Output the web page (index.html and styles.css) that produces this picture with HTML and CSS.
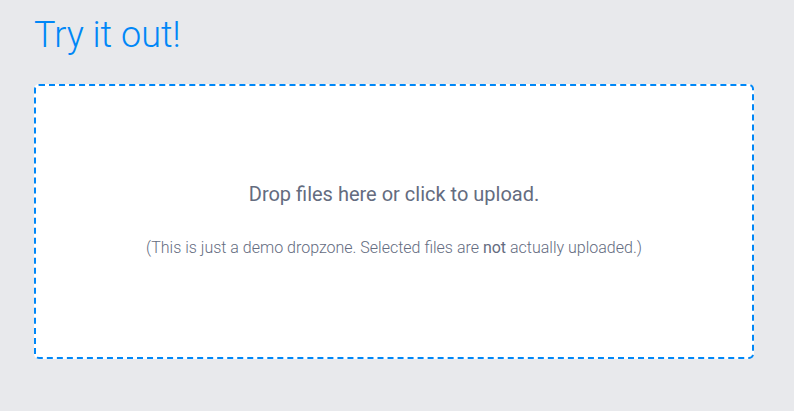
FILE: index.html
```html
<!DOCTYPE html>
<html lang="en">
<head>
    <meta charset="UTF-8">
    <meta name="viewport" content="width=device-width, initial-scale=1.0">
    <title>Try it out!</title>
    <link rel="stylesheet" href="styles.css">
</head>
<body>
    <div class="container">
        <h1>Try it out!</h1>

        <form class="dropzone" action="#">
            <div class="dz-message">
                <h3>Drop files here or click to upload.</h3>
                <p class="note">(This is just a demo dropzone. Selected files are <strong>not</strong> actually uploaded.)</p>
            </div>
        </form>
    </div>
</body>
</html>
```

FILE: styles.css
```css
/* Global Styles */
body {
    font-family: Roboto, 'Liberation Sans', sans-serif;
    background: #e8e9ec;
    color: #646c7f;
    margin: 0;
    padding: 0;
}

.container {
    padding: 0 40px 0 34px;
}

h1 {
    font-size: 36px;
    font-weight: 300;
    color: #0087f7;
    line-height: 46px;
    margin: 12px 0 26px 0;
}

/* Dropzone */
.dropzone {
    display: block;
    background: white;
    border: 2px dashed #0087f7;
    border-radius: 5px;
    box-sizing: border-box;
    height: 275px;
}

.dz-message {
    text-align: center;
    padding-top: 96px;
}

.dz-message h3 {
    font-size: 20px;
    font-weight: 400;
    line-height: 24px;
    margin: 0 0 32px 0;
}

.note {
    font-size: 16px;
    font-weight: 300;
    line-height: 20px;
    margin: 0;
}

.note strong {
    font-weight: 400;
}
```
